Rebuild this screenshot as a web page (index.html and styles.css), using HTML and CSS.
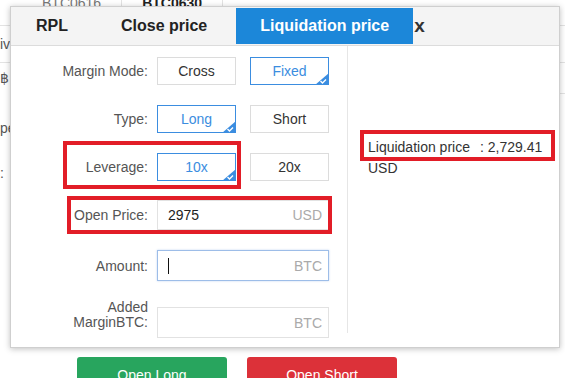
FILE: index.html
```html
<!DOCTYPE html>
<html lang="en">
  <head>
    <meta charset="UTF-8" />
    <meta name="viewport" content="width=device-width, initial-scale=1.0" />
    <title>Liquidation price</title>
    <link rel="stylesheet" href="styles.css">
  </head>
  <body>
    <!-- page behind the dialog -->
    <div class="page">
      <div class="pg-tabs">
        <span class="pg-tab">BTC0616</span>
        <span class="pg-tab pg-tab-on">BTC0630</span>
      </div>
      <div class="pg-row">iv</div>
      <div class="pg-row2">฿</div>
      <div class="pg-list">
        <p>pe</p>
        <p class="pg-last">:</p>
      </div>
      <div class="pg-actions">
        <button class="btn btn-long">Open Long</button>
        <button class="btn btn-short">Open Short</button>
      </div>
    </div>

    <!-- calculator dialog -->
    <div class="modal">
      <div class="modal-head">
        <span class="mtab">RPL</span>
        <span class="mtab">Close price</span>
        <span class="mtab mtab-on">Liquidation price</span>
        <span class="modal-close">x</span>
      </div>
      <div class="modal-body">
        <div class="calc-form">
          <div class="field">
            <label class="field-label">Margin Mode:</label>
            <div class="opts">
              <span class="opt">Cross</span>
              <span class="opt opt-on">Fixed
                <svg class="tick" width="14" height="12" viewBox="0 0 14 12"><polygon points="14,0 14,12 0,12" fill="#3b8de0"/><polyline points="5.5,8 7.5,10 11,6.5" fill="none" stroke="#fff" stroke-width="1.4"/></svg>
              </span>
            </div>
          </div>
          <div class="field">
            <label class="field-label">Type:</label>
            <div class="opts">
              <span class="opt opt-on">Long
                <svg class="tick" width="14" height="12" viewBox="0 0 14 12"><polygon points="14,0 14,12 0,12" fill="#3b8de0"/><polyline points="5.5,8 7.5,10 11,6.5" fill="none" stroke="#fff" stroke-width="1.4"/></svg>
              </span>
              <span class="opt">Short</span>
            </div>
          </div>
          <div class="field">
            <label class="field-label">Leverage:</label>
            <div class="opts">
              <span class="opt opt-on">10x
                <svg class="tick" width="14" height="12" viewBox="0 0 14 12"><polygon points="14,0 14,12 0,12" fill="#3b8de0"/><polyline points="5.5,8 7.5,10 11,6.5" fill="none" stroke="#fff" stroke-width="1.4"/></svg>
              </span>
              <span class="opt">20x</span>
            </div>
          </div>
          <div class="field field-open">
            <label class="field-label">Open Price:</label>
            <div class="inp"><span class="inp-val">2975</span><span class="inp-unit">USD</span></div>
          </div>
          <div class="field field-amount">
            <label class="field-label">Amount:</label>
            <div class="inp inp-focus"><span class="caret"></span><span class="inp-unit">BTC</span></div>
          </div>
          <div class="field field-margin">
            <label class="field-label field-label-2">Added<br>MarginBTC:</label>
            <div class="inp"><span></span><span class="inp-unit">BTC</span></div>
          </div>
        </div>
        <div class="calc-result">
          Liquidation price<span class="calc-val">: 2,729.41</span> USD
        </div>
      </div>

      <!-- red annotation frames -->
      <span class="mark mark-lev"></span>
      <span class="mark mark-open"></span>
      <span class="mark mark-liq"></span>
    </div>
  </body>
</html>
```

FILE: styles.css
```css
html,
body {
  height: 378px;
  overflow: hidden;
}

body {
  margin: 0;
  font-family: "Liberation Sans", Arial, sans-serif;
  font-size: 14px;
  color: #333;
  background: #fff;
  position: relative;
}

/* background page */
.pg-tabs {
  display: flex;
  align-items: flex-start;
  height: 26px;
  box-sizing: border-box;
  border-bottom: 1px solid #e3e3e3;
  padding-left: 22px;
}

.pg-tab {
  padding: 0 20px;
  margin-top: -5px;
  line-height: 16px;
  color: #777;
  border-right: 1px solid #e3e3e3;
}

.pg-tab-on {
  color: #222;
  font-weight: bold;
}

.pg-row {
  height: 37px;
  box-sizing: border-box;
  border-bottom: 1px solid #e3e3e3;
  line-height: 36px;
  color: #555;
}

.pg-row2 {
  height: 31px;
  line-height: 30px;
  color: #555;
  background: linear-gradient(#e3e3e3, #e3e3e3) no-repeat right bottom / 50% 1px;
}

.pg-list p {
  margin: 24px 0 0;
  line-height: 20px;
  color: #555;
}

.pg-list .pg-last {
  margin-top: 25px;
}

.pg-actions {
  display: flex;
  gap: 20px;
  margin: 174px 0 0 77px;
}

.btn {
  width: 150px;
  height: 36px;
  border: none;
  border-radius: 3px;
  color: #fff;
  font-family: inherit;
  font-size: 14px;
}

.btn-long {
  background: #28a55e;
}

.btn-short {
  background: #dc3139;
}

/* dialog */
.modal {
  position: absolute;
  left: 10px;
  top: 6px;
  width: 550px;
  height: 342px;
  box-sizing: border-box;
  border: 1px solid #cfcfcf;
  background: #fff;
  box-shadow: 0 1px 6px rgba(0, 0, 0, 0.25);
}

.modal-head {
  display: flex;
  gap: 5px;
  padding: 1px 0 1px 1px;
  background: #f4f4f4;
  border-bottom: 1px solid #dcdcdc;
}

.mtab {
  padding: 0 24px;
  line-height: 36px;
  font-size: 16px;
  font-weight: bold;
  color: #222;
}

.mtab-on {
  background: #1c87d9;
  color: #fff;
}

.modal-close {
  margin-left: -4px;
  line-height: 36px;
  font-size: 19px;
  font-weight: bold;
  color: #333;
}

.modal-body {
  display: flex;
}

.calc-form {
  width: 336px;
  padding-top: 11px;
}

.field {
  display: grid;
  grid-template-columns: 137px 172px;
  column-gap: 9px;
  align-items: center;
  margin-top: 20px;
}

.field:first-child {
  margin-top: 0;
}

.field-open {
  margin-top: 19px;
}

.field-margin {
  margin-top: 19px;
  align-items: end;
}

.field-label {
  text-align: right;
  color: #555;
}

.field-label-2 {
  line-height: 15px;
  margin-bottom: 8px;
}

.opts {
  display: flex;
  gap: 14px;
}

.opt {
  position: relative;
  width: 80px;
  height: 28px;
  box-sizing: border-box;
  border: 1px solid #dcdcdc;
  line-height: 26px;
  text-align: center;
  color: #333;
}

.opt-on {
  border-color: #3b8de0;
  color: #3b8de0;
}

.tick {
  position: absolute;
  right: -1px;
  bottom: -1px;
  display: block;
}

.inp {
  display: flex;
  justify-content: space-between;
  align-items: center;
  height: 30px;
  box-sizing: border-box;
  border: 1px solid #e2e2e2;
  padding: 0 6px 0 10px;
}

.field-amount .inp,
.field-margin .inp {
  height: 31px;
}

.inp-focus {
  border-color: #9dbde8;
  box-shadow: 0 0 2px rgba(80, 140, 220, 0.35);
}

.inp-val {
  color: #222;
}

.inp-unit {
  color: #aaa;
}

.caret {
  width: 1px;
  height: 16px;
  background: #111;
}

.calc-result {
  flex: 1;
  align-self: flex-start;
  height: 287px;
  box-sizing: border-box;
  border-left: 1px solid #e6e6e6;
  padding: 91px 10px 0 20px;
  line-height: 21px;
  color: #333;
}

.calc-val {
  margin-left: 10px;
}

/* annotation frames drawn over the dialog */
.mark {
  position: absolute;
  box-sizing: border-box;
  border: 4px solid #e21d27;
}

.mark-lev {
  left: 52px;
  top: 134px;
  width: 178px;
  height: 48px;
}

.mark-open {
  left: 56px;
  top: 189px;
  width: 265px;
  height: 38px;
}

.mark-liq {
  left: 349px;
  top: 123px;
  width: 195px;
  height: 31px;
}
```
